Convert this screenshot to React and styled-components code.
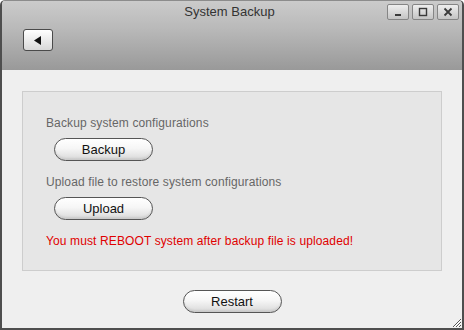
import React from "react";
import styled, { createGlobalStyle } from "styled-components";

const Global = createGlobalStyle`
  html, body { margin: 0; padding: 0; background: #ffffff; }
  body { font-family: "Liberation Sans", Arial, sans-serif; }
  * { box-sizing: border-box; }
`;

const Window = styled.div`
  position: relative;
  width: 464px;
  height: 330px;
  display: flex;
  flex-direction: column;
  border: 2px solid #4e4e4e;
  border-top: 1px solid #8c8c8c;
  border-top-left-radius: 5px;
  border-top-right-radius: 5px;
  overflow: hidden;
  background: #efefef;
`;

const Header = styled.div`
  height: 69px;
  display: flex;
  flex-direction: column;
  background: linear-gradient(#cbcbcb 0%, #b9b9b9 40%, #999999 100%);
`;

const TitleBar = styled.div`
  display: grid;
  grid-template-columns: 1fr auto 1fr;
  align-items: start;
  height: 28px;
  padding: 2px 3px 0 0;
`;

const Title = styled.div`
  grid-column: 2;
  font-size: 13px;
  color: #333333;
  line-height: 18px;
  padding-top: 0px;
  padding-right: 2px;
`;

const WinButtons = styled.div`
  grid-column: 3;
  justify-self: end;
  display: flex;
  gap: 3px;
  padding-top: 1px;
`;

const WinButton = styled.div`
  width: 22px;
  height: 16px;
  border: 1px solid #858585;
  border-radius: 2px;
  background: linear-gradient(#eeeeee, #c4c4c4);
  display: flex;
  align-items: center;
  justify-content: center;
`;

const Toolbar = styled.div`
  display: flex;
  padding: 0 0 0 21px;
`;

const BackButton = styled.div`
  width: 30px;
  height: 22px;
  border: 1px solid #4a4a4a;
  border-radius: 3px;
  background: linear-gradient(#ffffff, #d8d8d8);
  display: flex;
  align-items: center;
  justify-content: center;
`;

const Body = styled.div`
  flex: 1;
  display: flex;
  flex-direction: column;
  align-items: center;
  padding: 21px 20px 0 20px;
`;

const Panel = styled.div`
  align-self: stretch;
  height: 180px;
  background: #e6e6e6;
  border: 1px solid #cdcdcd;
  padding: 23px 23px 0 23px;
  display: flex;
  flex-direction: column;
  align-items: flex-start;
`;

const Label = styled.div`
  font-size: 12px;
  line-height: 16px;
  letter-spacing: 0.12px;
  color: ${(p) => (p.$warn ? "#e00000" : "#666666")};
  margin-top: ${(p) => p.$gap || 0}px;
`;

const PillButton = styled.div`
  width: 99px;
  height: 23px;
  margin-top: ${(p) => p.$gap || 0}px;
  margin-left: ${(p) => p.$indent || 0}px;
  border: 1px solid #555555;
  border-radius: 12px;
  background: linear-gradient(#ffffff 0%, #f6f6f6 45%, #d9d9d9 100%);
  box-shadow: inset 0 -2px 2px rgba(0, 0, 0, 0.08);
  font-size: 13px;
  color: #111111;
  display: flex;
  align-items: center;
  justify-content: center;
`;

const Grip = styled.svg`
  position: absolute;
  right: 0;
  bottom: 0;
`;

export default function App() {
  return (
    <>
      <Global />
      <Window>
        <Header>
          <TitleBar>
            <Title>System Backup</Title>
            <WinButtons>
              <WinButton>
                <svg width="10" height="10" viewBox="0 0 10 10">
                  <rect x="2" y="7" width="6" height="2" fill="#3a3a3a" />
                </svg>
              </WinButton>
              <WinButton>
                <svg width="10" height="10" viewBox="0 0 10 10">
                  <rect x="1.5" y="1.5" width="7" height="7" fill="none" stroke="#3a3a3a" strokeWidth="1.4" />
                </svg>
              </WinButton>
              <WinButton>
                <svg width="10" height="10" viewBox="0 0 10 10">
                  <path d="M1.5 1.5 L8.5 8.5 M8.5 1.5 L1.5 8.5" stroke="#3a3a3a" strokeWidth="1.8" />
                </svg>
              </WinButton>
            </WinButtons>
          </TitleBar>
          <Toolbar>
            <BackButton>
              <svg width="8" height="9" viewBox="0 0 8 9">
                <path d="M7 0 L7 9 L0 4.5 Z" fill="#111111" />
              </svg>
            </BackButton>
          </Toolbar>
        </Header>
        <Body>
          <Panel>
            <Label>Backup system configurations</Label>
            <PillButton $gap={7} $indent={8}>Backup</PillButton>
            <Label $gap={13}>Upload file to restore system configurations</Label>
            <PillButton $gap={7} $indent={8}>Upload</PillButton>
            <Label $warn $gap={13}>You must REBOOT system after backup file is uploaded!</Label>
          </Panel>
          <PillButton $gap={19}>Restart</PillButton>
        </Body>
        <Grip width="12" height="12" viewBox="0 0 12 12">
          <path d="M11 3 L3 11 M11 6 L6 11 M11 9 L9 11" stroke="#555" strokeWidth="1" />
          <path d="M11 4 L4 11 M11 7 L7 11" stroke="#fff" strokeWidth="1" />
        </Grip>
      </Window>
    </>
  );
}
